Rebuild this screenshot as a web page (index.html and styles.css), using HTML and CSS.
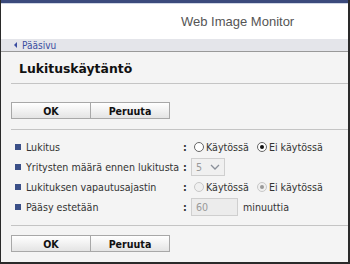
FILE: index.html
```html
<!DOCTYPE html>
<html>
<head>
<meta charset="utf-8">
<link rel="stylesheet" href="styles.css">
</head>
<body>
<div class="frame">
  <div class="topbar"></div>
  <div class="header"><span class="brand">Web Image Monitor</span></div>
  <div class="nav"><span class="tri"></span><a class="home">Pääsivu</a></div>
  <div class="content">
    <h1 class="title">Lukituskäytäntö</h1>
    <div class="rule"></div>
    <div class="buttons">
      <button class="btn">OK</button><button class="btn">Peruuta</button>
    </div>
    <div class="rule"></div>
    <div class="rows">
      <div class="row">
        <span class="label"><span class="bullet"></span>Lukitus</span>
        <span class="colon">:</span>
        <span class="radio"></span><span class="opt">Käytössä</span>
        <span class="radio checked"></span><span class="opt">Ei käytössä</span>
      </div>
      <div class="row">
        <span class="label"><span class="bullet"></span>Yritysten määrä ennen lukitusta</span>
        <span class="colon">:</span>
        <span class="select"><span class="val">5</span><svg class="chev" width="10" height="6" viewBox="0 0 10 6"><path d="M1 1 L5 5 L9 1" fill="none" stroke="#8a8f99" stroke-width="1.3"/></svg></span>
      </div>
      <div class="row">
        <span class="label"><span class="bullet"></span>Lukituksen vapautusajastin</span>
        <span class="colon">:</span>
        <span class="radio dis"></span><span class="opt">Käytössä</span>
        <span class="radio dis checked"></span><span class="opt">Ei käytössä</span>
      </div>
      <div class="row">
        <span class="label"><span class="bullet"></span>Pääsy estetään</span>
        <span class="colon">:</span>
        <span class="input">60</span><span class="unit">minuuttia</span>
      </div>
    </div>
    <div class="rule"></div>
    <div class="buttons bottom">
      <button class="btn">OK</button><button class="btn">Peruuta</button>
    </div>
  </div>
</div>
</body>
</html>
```
FILE: styles.css
```css
html, body {
  margin: 0;
  padding: 0;
  width: 350px;
  height: 264px;
  overflow: hidden;
  background: #f4f4f4;
}
.frame {
  box-sizing: border-box;
  width: 350px;
  height: 264px;
  border-left: 1px solid #2a2a2a;
  border-right: 2px solid #2a2a2a;
  border-bottom: 2px solid #2a2a2a;
  display: flex;
  flex-direction: column;
  background: #f4f4f4;
  font-family: "DejaVu Sans Condensed", "DejaVu Sans", Verdana, sans-serif;
  font-stretch: semi-condensed;
  font-size: 10.6px;
  color: #333;
  overflow: hidden;
}
.topbar,
.header,
.nav {
  flex-shrink: 0;
}
.topbar {
  height: 3px;
  background: #3b4a7c;
  border-bottom: 1px solid #cfd6e6;
}
.header {
  height: 35px;
  background: #fff;
  display: flex;
  align-items: center;
  padding-left: 180px;
}
.brand {
  font-family: "Liberation Sans", Arial, sans-serif;
  font-stretch: normal;
  font-size: 13px;
  color: #555;
}
.nav {
  height: 12px;
  background: #e4e5ea;
  border-bottom: 1px solid #999;
  display: flex;
  align-items: center;
  padding-left: 13px;
}
.tri {
  width: 0;
  height: 0;
  border-top: 3px solid transparent;
  border-bottom: 3px solid transparent;
  border-right: 3px solid #3a4ca0;
  margin-right: 5px;
}
.home {
  color: #3a4ca0;
  font-size: 10px;
}
.content {
  padding-left: 10px;
  flex: 1 0 auto;
}
.title {
  margin: 0;
  padding: 10px 0 7px 8px;
  font-family: "DejaVu Sans", Verdana, sans-serif;
  font-stretch: normal;
  font-size: 12.4px;
  font-weight: bold;
  color: #111;
  line-height: 14px;
}
.rule {
  height: 1px;
  background: #c4c4c4;
}
.buttons {
  display: flex;
  padding: 18px 0 10px;
}
.buttons.bottom {
  padding-top: 9px;
}
.btn {
  width: 80px;
  height: 17px;
  padding: 0;
  margin: 0;
  border: 1px solid #a8a8a8;
  background: linear-gradient(#ffffff, #e4e4e4);
  font-family: "DejaVu Sans Condensed", "DejaVu Sans", Verdana, sans-serif;
  font-stretch: semi-condensed;
  font-size: 10.6px;
  font-weight: bold;
  color: #111;
}
.btn + .btn {
  margin-left: -1px;
}
.rows {
  padding: 7px 0 8px;
  display: flex;
  flex-direction: column;
}
.row {
  height: 20px;
  display: flex;
  align-items: center;
  white-space: nowrap;
}
.label {
  width: 172px;
  display: flex;
  align-items: center;
  color: #333;
}
.bullet {
  width: 6px;
  height: 6px;
  flex-shrink: 0;
  background: #3b5088;
  margin: 0 5px 0 4px;
}
.colon {
  width: 8px;
  font-weight: bold;
}
.radio {
  width: 10px;
  height: 10px;
  box-sizing: border-box;
  border: 1px solid #666;
  border-radius: 50%;
  background: #fff;
  margin: 0 2px 0 3px;
  position: relative;
}
.radio.checked::after {
  content: "";
  position: absolute;
  left: 2px;
  top: 2px;
  width: 4px;
  height: 4px;
  border-radius: 50%;
  background: #111;
}
.radio.dis {
  border-color: #c8c8c8;
  background: #f0f0f0;
}
.radio.dis.checked::after {
  background: #999;
}
.opt {
  margin-right: 5px;
}
.select {
  box-sizing: border-box;
  width: 34px;
  height: 18px;
  border: 1px solid #cfcfcf;
  background: #f0f0f0;
  display: flex;
  align-items: center;
  justify-content: space-between;
  padding: 0 4px;
  color: #999;
}
.input {
  box-sizing: border-box;
  width: 47px;
  height: 18px;
  border: 1px solid #cfcfcf;
  background: #ececec;
  display: flex;
  align-items: center;
  padding-left: 4px;
  color: #999;
}
.unit {
  margin-left: 5px;
}
```
